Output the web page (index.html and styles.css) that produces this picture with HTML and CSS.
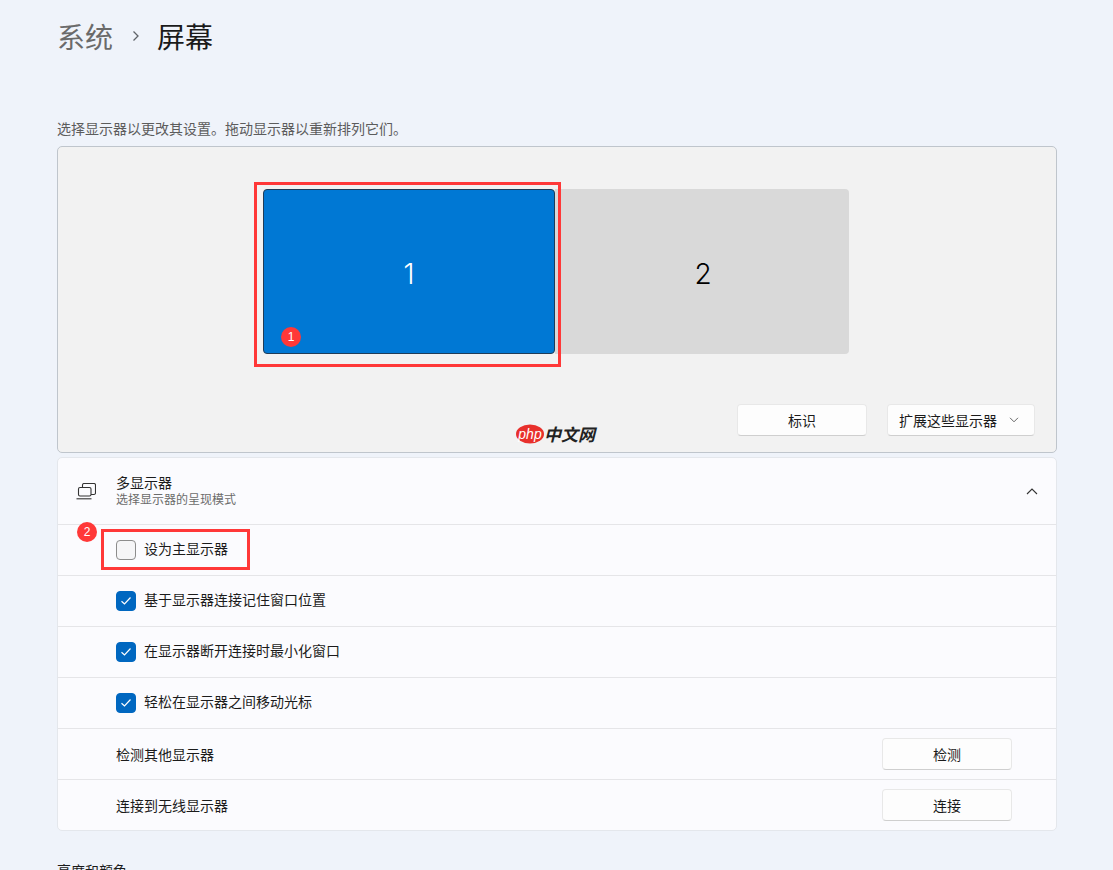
FILE: index.html
```html
<!DOCTYPE html>
<html lang="zh-CN">
<head>
<meta charset="utf-8">
<title>屏幕</title>
<link rel="stylesheet" href="styles.css">
</head>
<body>
<main class="page">
  <header class="crumbs">
    <span class="crumb-parent">系统</span>
    <svg class="crumb-sep" width="10" height="12" viewBox="0 0 10 12"><path d="M2.5 1.5 7 6l-4.500 4.500" fill="none" stroke="#5f6368" stroke-width="1.300"/></svg>
    <span class="crumb-current">屏幕</span>
  </header>
  <p class="hint">选择显示器以更改其设置。拖动显示器以重新排列它们。</p>

  <section class="stage">
    <div class="monitors">
      <div class="monitor monitor-active"><span class="monitor-num">1</span>
        <span class="mark mark-one">1</span>
        <span class="callout callout-one"></span>
      </div>
      <div class="monitor monitor-idle"><span class="monitor-num">2</span></div>
    </div>
    <div class="stage-actions">
      <button class="btn btn-identify">标识</button>
      <button class="btn btn-select">扩展这些显示器
        <svg width="10" height="6" viewBox="0 0 10 6"><path d="M1 .8 5 4.800 9 .8" fill="none" stroke="#666" stroke-width="1"/></svg>
      </button>
    </div>
    <div class="logo">
      <svg width="28" height="20" viewBox="0 0 28 20"><ellipse cx="14" cy="10" rx="14" ry="9.500" fill="#e8302c"/></svg>
      <span class="logo-php">php</span>
      <span class="logo-cn">中文网</span>
    </div>
  </section>

  <section class="card">
    <div class="card-head">
      <svg class="head-icon" width="20" height="17" viewBox="0 0 20 17" fill="none" stroke="#333" stroke-width="1.100">
        <path d="M6.500 4.500V2a1.500 1.500 0 0 1 1.500-1.500h10a1.500 1.500 0 0 1 1.500 1.500v8a1.500 1.500 0 0 1-1.500 1.500h-3"/>
        <rect x="2.500" y="4.500" width="12.500" height="8.500" rx="1.500"/>
        <path d="M.5 15.800h15"/>
      </svg>
      <div class="head-text">
        <div class="head-title">多显示器</div>
        <div class="head-sub">选择显示器的呈现模式</div>
      </div>
      <svg class="head-chevron" width="12" height="7" viewBox="0 0 12 7"><path d="M1 6 6 1l5 5" fill="none" stroke="#333" stroke-width="1.100"/></svg>
    </div>

    <div class="row">
      <span class="check"></span><span class="label">设为主显示器</span>
      <span class="mark mark-two">2</span>
      <span class="callout callout-two"></span>
    </div>
    <div class="row">
      <span class="check check-on"><svg width="12" height="10" viewBox="0 0 12 10"><path d="M1.500 5.200 4.500 8l6-6.500" fill="none" stroke="#fff" stroke-width="1.200"/></svg></span><span class="label">基于显示器连接记住窗口位置</span>
    </div>
    <div class="row">
      <span class="check check-on"><svg width="12" height="10" viewBox="0 0 12 10"><path d="M1.500 5.200 4.500 8l6-6.500" fill="none" stroke="#fff" stroke-width="1.200"/></svg></span><span class="label">在显示器断开连接时最小化窗口</span>
    </div>
    <div class="row">
      <span class="check check-on"><svg width="12" height="10" viewBox="0 0 12 10"><path d="M1.500 5.200 4.500 8l6-6.500" fill="none" stroke="#fff" stroke-width="1.200"/></svg></span><span class="label">轻松在显示器之间移动光标</span>
    </div>
    <div class="row row-action">
      <span class="label-low">检测其他显示器</span>
      <button class="btn btn-row">检测</button>
    </div>
    <div class="row row-action">
      <span class="label-low">连接到无线显示器</span>
      <button class="btn btn-row">连接</button>
    </div>
  </section>

  <h2 class="next-title">亮度和颜色</h2>
</main>
</body>
</html>
```

FILE: styles.css
```css
* { box-sizing: border-box; }
html, body { margin: 0; height: 870px; overflow: hidden; }
body {
  background: #eff3fa;
  color: #1b1b1b;
  font-family: "Noto Sans CJK SC", "Liberation Sans", sans-serif;
  font-size: 14px;
}
.page { width: 1000px; margin-left: 57px; position: relative; }

.crumbs { display: flex; align-items: center; height: 38px; margin-top: 17px; font-size: 28px; line-height: 38px; }
.crumb-parent { color: #6a6a6a; }
.crumb-sep { margin: 0 16px 0 18px; }
.crumb-current { color: #1a1a1a; }

.hint { margin: 0; height: 91px; padding-top: 63px; line-height: 20px; font-size: 14px; color: #5c5c5c; }

.stage {
  height: 307px;
  background: #f2f2f2;
  border: 1px solid #bfc5cc;
  border-radius: 5px;
  position: relative;
  padding: 42px 0 0 205px;
}
.monitors { display: flex; height: 165px; }
.monitor { display: flex; align-items: center; justify-content: center; font-size: 28px; font-family: "Inter", "Noto Sans", sans-serif; font-weight: 300; border-radius: 4px; position: relative; }
.monitor-num { padding-top: 4px; }
.monitor-active { width: 292px; background: #0078d4; color: #fff; border: 1px solid #1f3c58; z-index: 1; }
.monitor-idle { width: 294px; padding-left: 2px; background: #d9d9d9; color: #000; border-radius: 0 4px 4px 0; }

.stage-actions { display: flex; justify-content: flex-end; gap: 20px; padding: 50px 21px 0 0; }
.btn {
  height: 32px;
  background: #fdfdfd;
  border: 1px solid #e8e8e8;
  border-bottom-color: #cfcfcf;
  border-radius: 4px;
  font: inherit;
  font-size: 14px;
  color: #1b1b1b;
  padding: 0;
}
.btn-identify { width: 130px; }
.btn-select { width: 148px; display: flex; align-items: center; gap: 12px; padding-left: 11px; }
.btn-row { width: 130px; }

.logo { position: absolute; left: 458px; top: 277px; width: 84px; height: 20px; display: flex; align-items: center; }
.logo svg { position: absolute; left: 0; top: 0; }
.logo-php { position: relative; width: 28px; text-align: center; color: #fff; font: italic 14px/18px "Liberation Sans", sans-serif; }
.logo-cn { font-size: 17px; font-weight: 700; font-style: italic; line-height: 20px; color: #222; }

.card {
  margin-top: 4px;
  background: #fbfbfe;
  border: 1px solid #e4e7ec;
  border-radius: 5px;
}
.card-head { display: flex; align-items: center; height: 66px; padding: 0 18px; }
.head-icon { margin-right: 20px; flex: none; }
.head-text { flex: 1; padding-bottom: 2px; }
.head-title { font-size: 14px; line-height: 18px; color: #1b1b1b; }
.head-sub { font-size: 12px; line-height: 16px; color: #6b6b6b; }

.row { display: flex; align-items: center; height: 51px; padding-left: 58px; border-top: 1px solid #e5e5e8; position: relative; font-size: 14px; }
.row-action { justify-content: space-between; padding-right: 44px; }
.label { padding-bottom: 4px; }
.label-low { padding-bottom: 1px; }
.check { width: 20px; height: 20px; margin-right: 8px; border: 1px solid #8c8c8c; border-radius: 4px; background: #f5f5f7; display: flex; align-items: center; justify-content: center; }
.check-on { background: #0067c0; border-color: #0067c0; }

.mark { position: absolute; width: 20px; height: 20px; border-radius: 50%; background: #ff3838; color: #fff; font-size: 12px; line-height: 20px; text-align: center; font-family: "Liberation Sans", sans-serif; }
.mark-one { left: 17px; top: 137px; }
.mark-two { left: 19px; top: -3px; }
.callout { position: absolute; border: 3px solid #ff3838; pointer-events: none; }
.callout-one { left: -10px; top: -8px; width: 307px; height: 185px; }
.callout-two { left: 43px; top: 4px; width: 149px; height: 41px; }

.next-title { margin: 29px 0 0; font-size: 14px; font-weight: 400; line-height: 20px; color: #1b1b1b; }
```
